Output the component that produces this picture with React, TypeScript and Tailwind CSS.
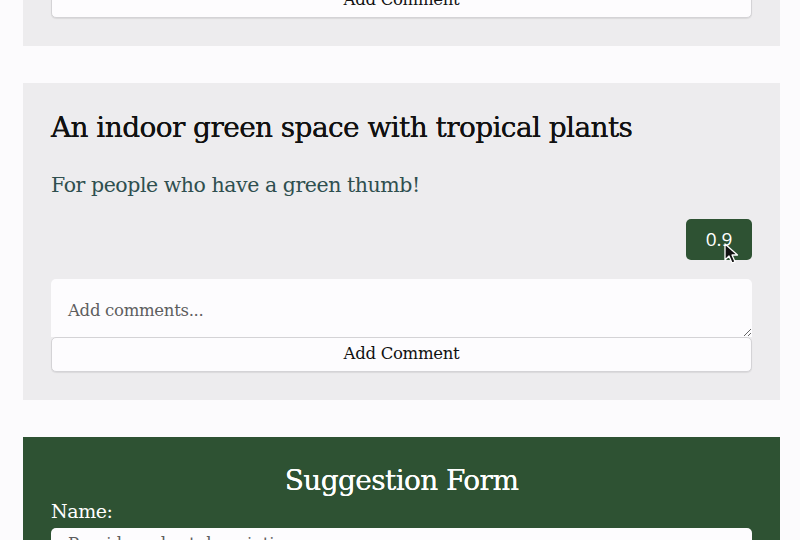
import React from 'react';

type Idea = { title: string; blurb: string; score: string };

const ideas: Idea[] = [
  { title: 'A quiet reading room with comfy chairs', blurb: 'For people who love a good book!', score: '0.7' },
  { title: 'An indoor green space with tropical plants', blurb: 'For people who have a green thumb!', score: '0.9' },
];

const serif = "font-['DejaVu_Serif','Liberation_Serif',serif]";

const Cursor: React.FC = () => (
  <svg className="absolute left-[38px] top-[24px] pointer-events-none" width="16" height="22" viewBox="0 0 16 22">
    <path d="M1 1 L1 17 L5 13 L8 20 L11 18.8 L8 12 L13.5 12 Z" fill="#111" stroke="#fff" strokeWidth="1.3" strokeLinejoin="round" />
  </svg>
);

const IdeaCard: React.FC<{ idea: Idea; showCursor?: boolean; className?: string }> = ({ idea, showCursor, className }) => (
  <section className={`bg-[#edecee] px-[28px] pt-[27px] pb-[28px] ${className ?? ''}`}>
    <h2 className="text-[28px] leading-[36px] text-[#111] tracking-[-0.6px] [text-shadow:0_0_0.4px_#111]">{idea.title}</h2>
    <p className="mt-[25px] text-[20.5px] leading-[28px] text-[#2f4f4f] tracking-[-0.45px]">{idea.blurb}</p>
    <div className="flex justify-end mt-[20px]">
      <div className="relative">
        <button className="w-[66px] h-[41px] rounded-[5px] bg-[#2e5233] text-white text-[19px] font-['Open_Sans',sans-serif]">
          {idea.score}
        </button>
        {showCursor && <Cursor />}
      </div>
    </div>
    <textarea
      placeholder="Add comments..."
      className="mt-[19px] block w-full h-[58px] rounded-t-[5px] bg-[#fdfcfe] px-[17px] pt-[22px] pb-[10px] text-[16.5px] leading-[20px] text-[#333] placeholder:text-[#5e5e5e] outline-none tracking-[-0.3px]"
    />
    <button className="block w-full h-[35px] rounded-[5px] border border-[#d4d3d6] bg-[#fdfcfe] text-[16.5px] text-[#111] shadow-[0_1px_1px_rgba(0,0,0,0.08)] tracking-[-0.3px]">
      Add Comment
    </button>
  </section>
);

const App: React.FC = () => {
  return (
    <div className={`min-h-screen bg-[#fcfbfd] pl-[23px] pr-[20px] overflow-hidden ${serif}`}>
      <div className="flex flex-col gap-[37px]">
        <IdeaCard idea={ideas[0]} className="-mt-[271px]" />
        <IdeaCard idea={ideas[1]} showCursor />
        <section className="bg-[#2e5233] px-[28px] pt-[26px] pb-[40px] text-white">
          <h2 className="text-center text-[28px] leading-[36px] tracking-[-0.6px] [text-shadow:0_0_0.4px_#fff]">Suggestion Form</h2>
          <label className="block text-[19px] leading-[24px] tracking-[-0.4px]">Name:</label>
          <input
            placeholder="Provide a short description"
            className="mt-[5px] block w-full h-[44px] rounded-[5px] bg-[#fdfcfe] px-[17px] pt-[3px] pb-[17px] text-[16.5px] leading-[24px] text-[#333] placeholder:text-[#5e5e5e] outline-none"
          />
        </section>
      </div>
    </div>
  );
};

export default App;
